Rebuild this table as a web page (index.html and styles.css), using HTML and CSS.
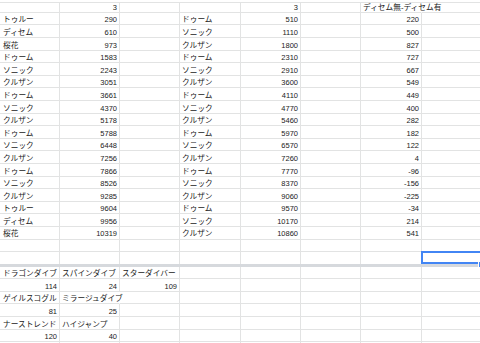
FILE: index.html
```html
<!DOCTYPE html>
<html lang="ja">
<head>
<meta charset="utf-8">
<title>Sheet</title>
<link rel="stylesheet" href="styles.css">
</head>
<body>
<div class="sheet">
  <div class="row first">
    <div class="c a"></div><div class="c n">3</div><div class="c"></div><div class="c"></div><div class="c n">3</div><div class="c"></div><div class="c j ov">ディセム無-ディセム有</div><div class="c"></div>
  </div>
  <div class="row"><div class="c a j">トゥルー</div><div class="c n">290</div><div class="c"></div><div class="c j">ドゥーム</div><div class="c n">510</div><div class="c"></div><div class="c n">220</div><div class="c"></div></div>
  <div class="row"><div class="c a j">ディセム</div><div class="c n">610</div><div class="c"></div><div class="c j">ソニック</div><div class="c n">1110</div><div class="c"></div><div class="c n">500</div><div class="c"></div></div>
  <div class="row"><div class="c a j">桜花</div><div class="c n">973</div><div class="c"></div><div class="c j">クルザン</div><div class="c n">1800</div><div class="c"></div><div class="c n">827</div><div class="c"></div></div>
  <div class="row"><div class="c a j">ドゥーム</div><div class="c n">1583</div><div class="c"></div><div class="c j">ドゥーム</div><div class="c n">2310</div><div class="c"></div><div class="c n">727</div><div class="c"></div></div>
  <div class="row"><div class="c a j">ソニック</div><div class="c n">2243</div><div class="c"></div><div class="c j">ソニック</div><div class="c n">2910</div><div class="c"></div><div class="c n">667</div><div class="c"></div></div>
  <div class="row"><div class="c a j">クルザン</div><div class="c n">3051</div><div class="c"></div><div class="c j">クルザン</div><div class="c n">3600</div><div class="c"></div><div class="c n">549</div><div class="c"></div></div>
  <div class="row"><div class="c a j">ドゥーム</div><div class="c n">3661</div><div class="c"></div><div class="c j">ドゥーム</div><div class="c n">4110</div><div class="c"></div><div class="c n">449</div><div class="c"></div></div>
  <div class="row"><div class="c a j">ソニック</div><div class="c n">4370</div><div class="c"></div><div class="c j">ソニック</div><div class="c n">4770</div><div class="c"></div><div class="c n">400</div><div class="c"></div></div>
  <div class="row"><div class="c a j">クルザン</div><div class="c n">5178</div><div class="c"></div><div class="c j">クルザン</div><div class="c n">5460</div><div class="c"></div><div class="c n">282</div><div class="c"></div></div>
  <div class="row"><div class="c a j">ドゥーム</div><div class="c n">5788</div><div class="c"></div><div class="c j">ドゥーム</div><div class="c n">5970</div><div class="c"></div><div class="c n">182</div><div class="c"></div></div>
  <div class="row"><div class="c a j">ソニック</div><div class="c n">6448</div><div class="c"></div><div class="c j">ソニック</div><div class="c n">6570</div><div class="c"></div><div class="c n">122</div><div class="c"></div></div>
  <div class="row"><div class="c a j">クルザン</div><div class="c n">7256</div><div class="c"></div><div class="c j">クルザン</div><div class="c n">7260</div><div class="c"></div><div class="c n">4</div><div class="c"></div></div>
  <div class="row"><div class="c a j">ドゥーム</div><div class="c n">7866</div><div class="c"></div><div class="c j">ドゥーム</div><div class="c n">7770</div><div class="c"></div><div class="c n">-96</div><div class="c"></div></div>
  <div class="row"><div class="c a j">ソニック</div><div class="c n">8526</div><div class="c"></div><div class="c j">ソニック</div><div class="c n">8370</div><div class="c"></div><div class="c n">-156</div><div class="c"></div></div>
  <div class="row"><div class="c a j">クルザン</div><div class="c n">9285</div><div class="c"></div><div class="c j">クルザン</div><div class="c n">9060</div><div class="c"></div><div class="c n">-225</div><div class="c"></div></div>
  <div class="row"><div class="c a j">トゥルー</div><div class="c n">9604</div><div class="c"></div><div class="c j">ドゥーム</div><div class="c n">9570</div><div class="c"></div><div class="c n">-34</div><div class="c"></div></div>
  <div class="row"><div class="c a j">ディセム</div><div class="c n">9956</div><div class="c"></div><div class="c j">ソニック</div><div class="c n">10170</div><div class="c"></div><div class="c n">214</div><div class="c"></div></div>
  <div class="row"><div class="c a j">桜花</div><div class="c n">10319</div><div class="c"></div><div class="c j">クルザン</div><div class="c n">10860</div><div class="c"></div><div class="c n">541</div><div class="c"></div></div>
  <div class="row"><div class="c a"></div><div class="c"></div><div class="c"></div><div class="c"></div><div class="c"></div><div class="c"></div><div class="c"></div><div class="c"></div></div>
  <div class="row sel-row"><div class="c a"></div><div class="c"></div><div class="c"></div><div class="c"></div><div class="c"></div><div class="c"></div><div class="c"></div><div class="c sel-cell"><span class="sel-box"></span><span class="sel-handle"></span></div></div>
  <div class="divider"></div>
  <div class="row"><div class="c a j">ドラゴンダイブ</div><div class="c j">スパインダイブ</div><div class="c j">スターダイバー</div><div class="c"></div><div class="c"></div><div class="c"></div><div class="c"></div><div class="c"></div></div>
  <div class="row"><div class="c n">114</div><div class="c n">24</div><div class="c n">109</div><div class="c"></div><div class="c"></div><div class="c"></div><div class="c"></div><div class="c"></div></div>
  <div class="row"><div class="c a j">ゲイルスコグル</div><div class="c j ov">ミラージュダイブ</div><div class="c"></div><div class="c"></div><div class="c"></div><div class="c"></div><div class="c"></div><div class="c"></div></div>
  <div class="row"><div class="c n">81</div><div class="c n">25</div><div class="c"></div><div class="c"></div><div class="c"></div><div class="c"></div><div class="c"></div><div class="c"></div></div>
  <div class="row"><div class="c a j">ナーストレンド</div><div class="c j">ハイジャンプ</div><div class="c"></div><div class="c"></div><div class="c"></div><div class="c"></div><div class="c"></div><div class="c"></div></div>
  <div class="row"><div class="c n">120</div><div class="c n">40</div><div class="c"></div><div class="c"></div><div class="c"></div><div class="c"></div><div class="c"></div><div class="c"></div></div>
  <div class="row"><div class="c a"></div><div class="c"></div><div class="c"></div><div class="c"></div><div class="c"></div><div class="c"></div><div class="c"></div><div class="c"></div></div>
</div>
</body>
</html>
```
FILE: styles.css
```css
html, body {
  margin: 0;
  padding: 0;
  background: #ffffff;
}

body {
  width: 480px;
  height: 343px;
  overflow: hidden;
  font-family: "Liberation Sans", Arial, "Noto Sans CJK JP", sans-serif;
  font-size: 7.5px;
  color: #222222;
}

.sheet {
  width: 482px;
  margin-top: 2px;
  border-top: 1px solid #e2e3e3;
}

.row {
  display: grid;
  grid-template-columns: 60px 60px 60px 61px 60px 60px 61px 60px;
  height: 12.6px;
}

.c {
  box-sizing: border-box;
  border-right: 1px solid #e2e3e3;
  border-bottom: 1px solid #e2e3e3;
  padding: 2.5px 2px 0 2px;
  line-height: 9px;
  white-space: nowrap;
  overflow: visible;
  min-width: 0;
}

.a {
  padding-left: 3px;
}

.n {
  text-align: right;
}

.j {
  font-size: 7.7px;
}

.ov {
  border-right-color: transparent;
  position: relative;
  z-index: 1;
}

.first {
  height: 9.9px;
}

.first .c {
  padding-top: 0;
}

.sel-row {
  height: 12px;
}

.sel-row .c {
  border-bottom: none;
}

.sel-cell {
  position: relative;
}

.sel-box {
  position: absolute;
  left: -1px;
  top: -1px;
  width: 61px;
  height: 13px;
  box-sizing: border-box;
  border: 2px solid #4285f4;
}

.sel-handle {
  position: absolute;
  left: 56px;
  top: 9px;
  width: 5px;
  height: 5px;
  background: #4285f4;
  border: 1px solid #ffffff;
}

.divider {
  height: 2.5px;
  background: #d6d9dd;
}
```
